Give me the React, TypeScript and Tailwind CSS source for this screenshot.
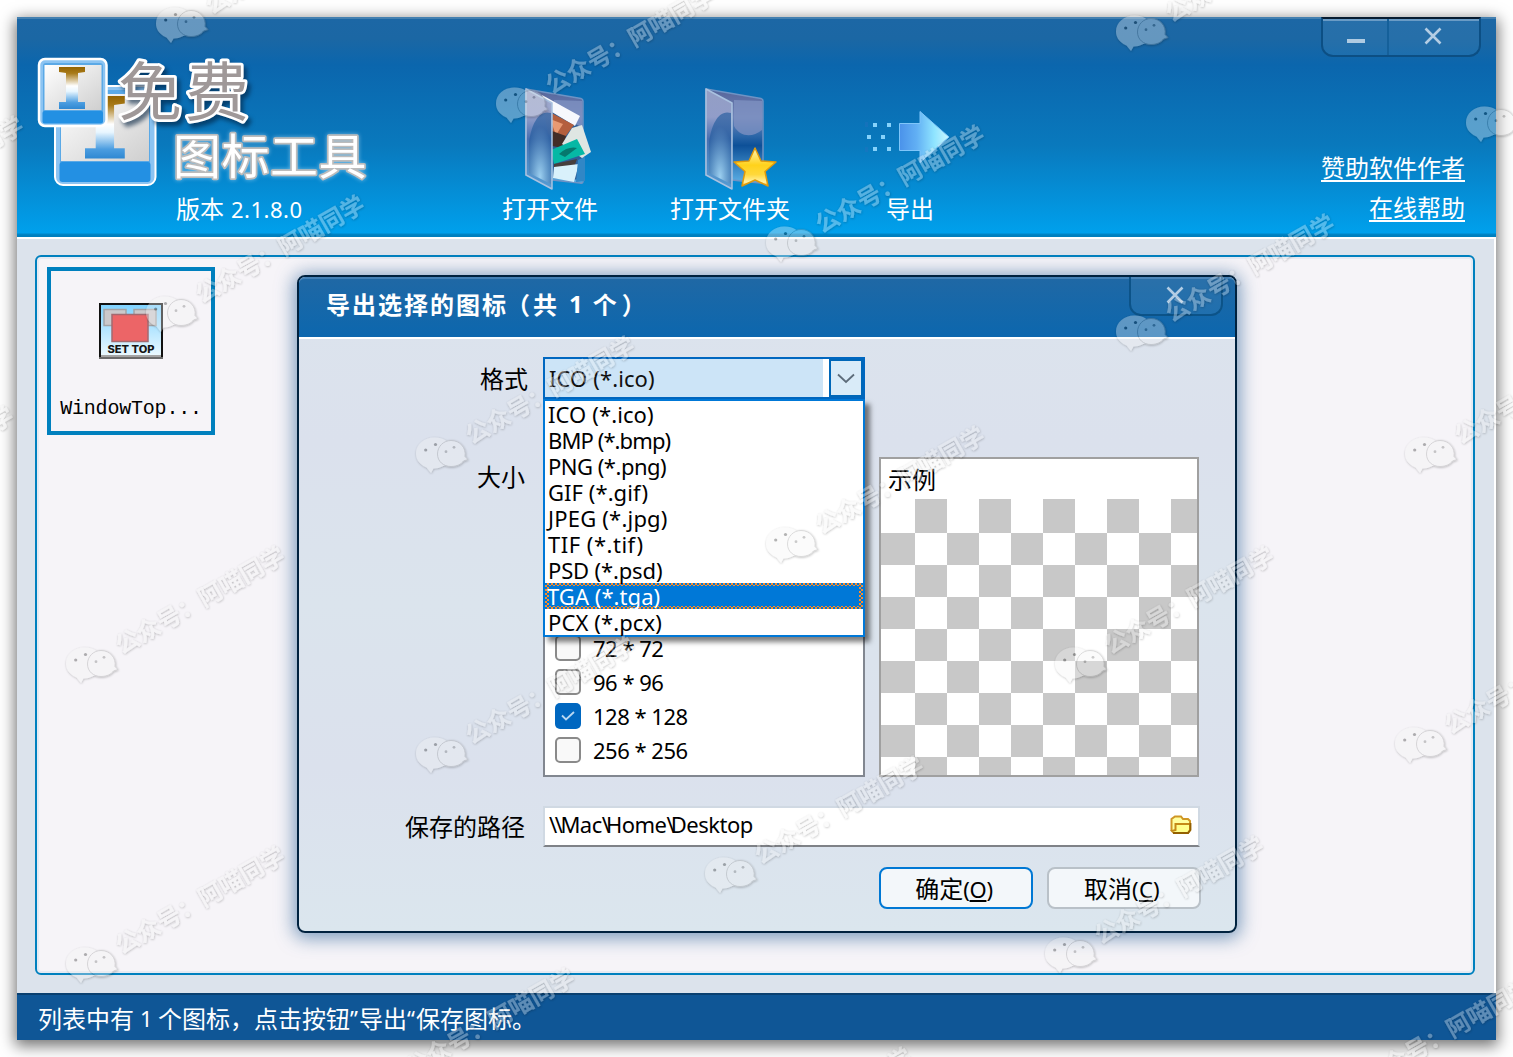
import React from "react";

const CJK = "font-['Noto_Sans_CJK_SC',sans-serif]";
const UI = "font-['Noto_Sans','Noto_Sans_CJK_SC',sans-serif]";

const formats = [
  { label: "ICO (*.ico)", spacing: "tracking-[0.1px]" },
  { label: "BMP (*.bmp)", spacing: "tracking-[-0.9px]" },
  { label: "PNG (*.png)", spacing: "tracking-[-0.5px]" },
  { label: "GIF (*.gif)", spacing: "tracking-[0.05px]" },
  { label: "JPEG (*.jpg)", spacing: "tracking-[0.2px]" },
  { label: "TIF (*.tif)", spacing: "tracking-[0.5px]" },
  { label: "PSD (*.psd)", spacing: "tracking-[-0.15px]" },
  { label: "TGA (*.tga)", spacing: "tracking-[0.05px]" },
  { label: "PCX (*.pcx)", spacing: "tracking-[0.1px]" },
];

const sizes = [
  { label: "72 * 72", checked: false },
  { label: "96 * 96", checked: false },
  { label: "128 * 128", checked: true },
  { label: "256 * 256", checked: false },
];

const marks: [number, number][] = [
  [182, 23], [522, 103], [1142, 31], [1492, 122], [172, 312], [792, 242],
  [1142, 331], [442, 453], [792, 543], [1431, 453], [92, 663], [1081, 663],
  [442, 753], [1421, 743], [92, 963], [731, 873], [1071, 953],
  [-169, 233], [-179, 523], [382, 1085], [1340, 1094], [719, 1164],
];

function Watermark() {
  return (
    <svg className="pointer-events-none absolute inset-0 z-30" width="1513" height="1057" viewBox="0 0 1513 1057">
      <defs>
        <filter id="wmShadow" x="-20%" y="-20%" width="140%" height="140%">
          <feDropShadow dx="0.4" dy="0.7" stdDeviation="0.9" floodColor="#000" floodOpacity="0.75" />
        </filter>
      </defs>
      {marks.map(([x, y], i) => (
        <g key={i} transform={`translate(${x} ${y})`} opacity="0.34" filter="url(#wmShadow)">
          <path
            d="M-7.500-15.500C-18-15.500-26-8.500-26 0.500C-26 6-23 10-18.500 13L-15.500 14.500L-11 20L-8.500 15.500C-5 15.500-2 14.500 0 13.500C8 11 10 5 10.500-3C8.500-11 1-15.500-7.500-15.500Z"
            fill="#f4f4f4"
          />
          <path
            d="M9-12.500C1.500-12.500-4.500-6.500-4.500 1C-4.500 8.500 1.500 13.500 9 13.500C15 13.500 19.500 11 21.500 8L26 6.500L23 3.500C24.500-5 18-12.500 9-12.500Z"
            fill="#f4f4f4"
            stroke="#8f8f8f"
            strokeWidth="0.9"
          />
          <circle cx="-16.300" cy="-3" r="1.600" fill="#222" />
          <circle cx="-6.500" cy="-8.500" r="1.600" fill="#222" />
          <circle cx="4" cy="-1.300" r="1.400" fill="#666" />
          <circle cx="12" cy="-5.700" r="1.400" fill="#666" />
          <text
            transform="translate(35.500 -22) rotate(-29.700)"
            x="-12"
            y="9"
            fontSize="23.800"
            fontWeight="700"
            fontFamily="'Noto Sans CJK SC', sans-serif"
            fill="#f4f4f4"
          >
            公众号：阿喵同学
          </text>
        </g>
      ))}
    </svg>
  );
}

function Logo() {
  const beam = (
    <path d="M0 0H26V5L19 6V35H26V42H0V35H7V6L0 5Z" fill="url(#beam)" />
  );
  return (
    <svg width="360" height="200" viewBox="17 17 360 200" className="shrink-0">
      <defs>
        <linearGradient id="beam" x1="0" y1="0" x2="0" y2="1">
          <stop offset="0" stopColor="#936300" />
          <stop offset=".15" stopColor="#a87a18" />
          <stop offset=".45" stopColor="#fff" />
          <stop offset=".58" stopColor="#e8f6ff" />
          <stop offset=".85" stopColor="#4b9de0" />
          <stop offset="1" stopColor="#2f88d2" />
        </linearGradient>
        <linearGradient id="paper" x1="0" y1="0" x2="1" y2="1">
          <stop offset="0" stopColor="#fff" />
          <stop offset="1" stopColor="#cfcfcf" />
        </linearGradient>
      </defs>
      <rect x="55" y="86" width="100.500" height="99" rx="8" fill="#8cc4f2" stroke="#fff" strokeWidth="2" />
      <rect x="60" y="90" width="90" height="91" rx="3" fill="#5ba9e6" />
      <rect x="61" y="94" width="88" height="67" fill="url(#paper)" />
      <rect x="59.500" y="162" width="91" height="20" rx="3" fill="#2390e3" />
      <g transform="translate(85 96) scale(1.530 1.490)">{beam}</g>
      <rect x="39" y="59" width="67.500" height="67" rx="6" fill="#8cc4f2" stroke="#fff" strokeWidth="2.500" />
      <rect x="43" y="63" width="60" height="59" rx="3" fill="#5ba9e6" />
      <rect x="44.500" y="65" width="57" height="45" fill="url(#paper)" />
      <rect x="42.500" y="111" width="60.500" height="12.500" rx="2" fill="#2390e3" />
      <g transform="translate(59 67)">{beam}</g>
      <g style={{ filter: "drop-shadow(3px 4px 2px rgba(0,30,60,.6))" }}>
        <text
          x="118"
          y="115"
          fontSize="64"
          letterSpacing="3"
          fontWeight="400"
          fontFamily="'Noto Sans CJK SC', sans-serif"
          fill="#9f9898"
          stroke="#fff"
          strokeWidth="5.500"
          strokeLinejoin="round"
          paintOrder="stroke"
        >
          免费
        </text>
      </g>
      <g style={{ filter: "drop-shadow(0 0 2px rgba(190,225,250,.6))" }}>
        <text
          x="173"
          y="174"
          fontSize="48"
          fontWeight="400"
          letterSpacing="0.500"
          fontFamily="'Noto Sans CJK SC', sans-serif"
          fill="#fff"
          stroke="#bcbcbc"
          strokeWidth="3.500"
          strokeLinejoin="round"
          paintOrder="stroke"
        >
          图标工具
        </text>
      </g>
    </svg>
  );
}

function FolderIcon({ kind }: { kind: "files" | "star" }) {
  return (
    <svg width="96" height="104" viewBox="0 0 96 104">
      <defs>
        <linearGradient id="fBack" x1="0" y1="0" x2="0" y2="1">
          <stop offset="0" stopColor="#56659a" />
          <stop offset=".3" stopColor="#6f84b8" />
          <stop offset=".5" stopColor="#2a66a8" />
          <stop offset=".6" stopColor="#0d5098" />
          <stop offset="1" stopColor="#5cb0e6" />
        </linearGradient>
        <linearGradient id="fFront" x1="0" y1="0" x2="0" y2="1">
          <stop offset="0" stopColor="#98a3c8" />
          <stop offset=".28" stopColor="#949fca" />
          <stop offset=".5" stopColor="#4b70b2" />
          <stop offset=".75" stopColor="#4f8cc6" />
          <stop offset="1" stopColor="#5e9dd2" />
        </linearGradient>
        <radialGradient id="fGlow" cx=".5" cy=".9" r=".7">
          <stop offset="0" stopColor="#a9daf6" />
          <stop offset="1" stopColor="#275e9f" stopOpacity=".8" />
        </radialGradient>
        <linearGradient id="star" x1="0" y1="0" x2="0" y2="1">
          <stop offset="0" stopColor="#fff6b8" />
          <stop offset=".45" stopColor="#ffd21b" />
          <stop offset=".7" stopColor="#ffd83c" />
          <stop offset=".9" stopColor="#fff3a8" />
          <stop offset="1" stopColor="#f5a300" />
        </linearGradient>
      </defs>
      <path d="M24 1L79 10.500Q81 11 81 13V91Q82 96 78 95L50 92L24 87Z" fill="url(#fBack)" stroke="#6f93c4" strokeWidth="1.500" />
      <path d="M52 12L80 13V42C70 50 58 49 52 38Z" fill="#8093c3" fillOpacity=".75" />
      {kind === "files" && (
        <g>
          <path d="M50 24L77 38L81 92L51 90Z" fill="#2e5f98" />
          <path d="M40 7L78 28L73 38L45 21Z" fill="#f6f8fd" />
          <path d="M42 21L72 37L60 53L46 46Z" fill="#b45f3e" />
          <path d="M48 31L61 36L54 47Z" fill="#e99a73" />
          <path d="M50 43L64 48L61 60L50 58Z" fill="#432d28" />
          <path d="M70 40L80 37L89 64L80 70L60 56Z" fill="#dfe6e3" />
          <path d="M49 62L75 51L83 66L52 76Z" fill="#06b8a5" />
          <path d="M57 66Q66 58 75 60L63 69Z" fill="#06786e" />
          <path d="M52 76L75 71L71 82L52 81Z" fill="#473f3d" />
          <path d="M52 79L77 76L72 94L51 90Z" fill="#d9f1fb" />
          <path d="M76 72L83 69V93L74 94Z" fill="#3187c6" />
        </g>
      )}
      <path d="M24 1L50 15V101L24 87Z" fill="url(#fFront)" fillOpacity=".93" stroke="#a9c2e0" strokeWidth="1.500" strokeLinejoin="round" />
      <path d="M49 25C36 21 29 38 27 54V85L49 96Z" fill="url(#fGlow)" fillOpacity=".85" />
      {kind === "star" && (
        <path
          d="M73 60L79 73L94 74L83 83.500L86 98L73 92L60 98L63 83.500L52 74L67 73Z"
          fill="url(#star)"
          stroke="#e09a0c"
          strokeWidth="1.500"
          strokeLinejoin="round"
        />
      )}
    </svg>
  );
}

function ExportIcon() {
  return (
    <svg width="96" height="104" viewBox="0 0 96 104">
      <defs>
        <linearGradient id="arr" x1="0" y1="0" x2="1" y2="0">
          <stop offset="0" stopColor="#4a92ea" />
          <stop offset=".35" stopColor="#62b0f4" />
          <stop offset=".7" stopColor="#8fe4ff" />
          <stop offset="1" stopColor="#c9f6ff" />
        </linearGradient>
      </defs>
      <path d="M37.500 35.500H58V23.500L87 49L58 74.500V62.500H37.500Z" fill="url(#arr)" stroke="#7fc6fa" strokeWidth="1" />
      <path d="M11 35h4v4h-4zM25 35h4v4h-4zM5 47h4v4h-4zM19 47h4v4h-4zM11 59h4v4h-4zM25 59h4v4h-4z" fill="#86d2fb" />
      <path d="M3 34h3v5h-3zM3 59h3v5h-3z" fill="#2a6fc0" fillOpacity=".35" />
    </svg>
  );
}

function CloseGlyph() {
  return (
    <svg width="18" height="18" viewBox="0 0 18 18" className="-ml-0.5 -mt-0.5">
      <path d="M1.500 1.500L16.500 16.500M16.500 1.500L1.500 16.500" stroke="#b3cde4" strokeWidth="2.600" />
    </svg>
  );
}

function AppThumb() {
  return (
    <svg width="64" height="56" viewBox="0 0 64 56">
      <defs>
        <linearGradient id="sky" x1="0" y1="0" x2="0" y2="1">
          <stop offset="0" stopColor="#7fd2ff" />
          <stop offset="1" stopColor="#f0fbff" />
        </linearGradient>
      </defs>
      <rect x="1" y="1" width="62" height="54" fill="url(#sky)" stroke="#111" strokeWidth="2" />
      <rect x="5" y="6.500" width="22" height="16" fill="#cbc9cb" stroke="#a4a4a6" strokeWidth="1.500" />
      <rect x="35" y="6.500" width="22" height="16" fill="#cbc9cb" stroke="#a4a4a6" strokeWidth="1.500" />
      <rect x="13" y="11.500" width="36" height="27" fill="#ec6567" stroke="#a36a70" strokeWidth="1.500" />
      <text x="8.500" y="49.500" fontSize="10" fontWeight="800" fontFamily="Inter, sans-serif" fill="#151515" textLength="47" lengthAdjust="spacingAndGlyphs">
        SET TOP
      </text>
      <path d="M2 52H62V54H2Z" fill="#a5a5a5" />
      <path d="M0 54H64V56H0Z" fill="#6b6b6b" />
    </svg>
  );
}

function ToolItem({ icon, label }: { icon: React.ReactNode; label: string }) {
  return (
    <button className="flex w-[180px] flex-col items-center pt-[71px]">
      {icon}
      <span className="text-2xl leading-8 text-white">{label}</span>
    </button>
  );
}

function Dialog() {
  return (
    <section className="absolute left-[280px] top-[258px] z-10 flex h-[658px] w-[940px] flex-col rounded-lg border-2 border-[#00223f] bg-[linear-gradient(#dce4ed,#dbe1ed_25%,#dbe4ed_50%,#dbe1ed_75%,#dbe6ee)] shadow-[0_2px_18px_3px_rgba(40,95,150,0.6)]">
      <header className="flex h-[62px] shrink-0 items-start justify-between rounded-t-md border-b-2 border-t-2 border-b-white border-t-[#4480b5] bg-[linear-gradient(#1f68a5,#0c67ae)] pl-[27px] pr-3">
        <h2 className="flex pt-[7px] text-2xl font-bold leading-9 text-white">
          <span className="tracking-[2px]">导出选择的图标</span>
          <span className="-ml-[2px]">（</span>
          <span className="ml-[3px]">共</span>
          <span className="ml-3 mr-[10px] font-['Noto_Sans']">1</span>
          <span>个</span>
          <span className="ml-[5px]">）</span>
        </h2>
        <div className="-mt-0.5 flex h-[39px] w-[94px] items-center justify-center rounded-b-xl border-2 border-t-0 border-[#0c5388] bg-white/5">
          <CloseGlyph />
        </div>
      </header>

      <div className="flex flex-col pr-[35px] pt-[18px]">
        <div className="flex h-[42px]">
          <label className="w-[244px] shrink-0 pr-[15px] pt-[3px] text-right text-2xl leading-9">格式</label>
          <div className="relative h-[42px] w-[322px] text-[22px]">
            <div className="flex h-[42px] border-2 border-[#0067c0] bg-[#cce4f7]">
              <span className={`flex-1 pl-1 leading-[38px] tracking-[0.1px] text-[#111] ${UI}`}>ICO (*.ico)</span>
              <span className="w-1.5 bg-white" />
              <span className="flex w-[34px] items-center justify-center border-2 border-[#0067b8] bg-[#d9ebf8]">
                <svg width="18" height="11" viewBox="0 0 18 11" className="-ml-px">
                  <path d="M1 1.500L9 9L17 1.500" fill="none" stroke="#5d6c7a" strokeWidth="1.800" />
                </svg>
              </span>
            </div>
            <ul className={`absolute left-0 top-[42px] z-20 w-[322px] border-2 border-[#0078d7] bg-white shadow-[5px_5px_5px_rgba(0,0,0,0.5)] ${UI}`}>
              {formats.map((f) =>
                f.label.startsWith("TGA") ? (
                  <li
                    key={f.label}
                    className="h-[26px] bg-[repeating-conic-gradient(#ff8c27_0_25%,#0078d7_0_50%)] bg-[length:4px_4px] px-1 py-[3px] text-white"
                  >
                    <div className={`h-5 bg-[#0078d7] leading-5 ${f.spacing}`}>
                      <span className="-ml-0.5">{f.label}</span>
                    </div>
                  </li>
                ) : (
                  <li key={f.label} className={`h-[26px] pl-[3px] leading-[26px] text-black ${f.spacing}`}>
                    {f.label}
                  </li>
                ),
              )}
            </ul>
          </div>
        </div>

        <div className="mt-[58px] flex h-80">
          <label className="w-[244px] shrink-0 pr-[18px] pt-px text-right text-2xl leading-9">大小</label>
          <div className="flex w-[322px] flex-col justify-end border-2 border-[#828790] bg-white pb-2 pl-[10px]">
            {sizes.map((s) => (
              <div key={s.label} className="flex h-[34px] items-center gap-3">
                {s.checked ? (
                  <span className="flex size-[26px] items-center justify-center rounded-[5px] bg-[#0067c0]">
                    <svg width="14" height="10" viewBox="0 0 14 10">
                      <path d="M1 4.500L5 8.500L13 1" fill="none" stroke="#b9d8f2" strokeWidth="1.800" />
                    </svg>
                  </span>
                ) : (
                  <span className="size-[26px] rounded-[5px] border-2 border-[#8a8a8a] bg-[#f9f9f9]" />
                )}
                <span className={`text-[22px] leading-[34px] tracking-[-0.5px] ${UI}`}>{s.label}</span>
              </div>
            ))}
          </div>
          <div className="ml-[14px] flex w-80 flex-col border-2 border-[#a0a0a0] bg-white">
            <span className="h-10 pl-[7px] text-2xl leading-[39px]">示例</span>
            <div className="grid flex-1 grid-cols-[34px_repeat(9,32px)] grid-rows-[34px_repeat(8,32px)] overflow-hidden">
              {Array.from({ length: 90 }, (_, i) => (
                <span key={i} className={(Math.floor(i / 10) + (i % 10)) % 2 ? "bg-[#c8c8c8]" : "bg-white"} />
              ))}
            </div>
          </div>
        </div>

        <div className="mt-[29px] flex h-[41px]">
          <label className="w-[244px] shrink-0 pr-[18px] pt-0.5 text-right text-2xl leading-9">保存的路径</label>
          <div className="flex w-[657px] items-start justify-between border-2 border-[#d0d9e3] border-b-[#7f8287] bg-white pl-1 pr-[6px]">
            <span className={`text-[22px] leading-8 tracking-[-0.5px] ${UI}`}>
              <span className="tracking-[-2.500px]">\\</span>Mac<span className="tracking-[-4px]">\</span>Home
              <span className="tracking-[-4px]">\</span>Desktop
            </span>
            <svg width="22" height="20" viewBox="0 0 22 20" className="mt-[7px]">
              <path d="M1.500 16V4L5 1.500H11L13 4H18L20 6V9H6V17" fill="#ffffa0" stroke="#cf9725" strokeWidth="2" />
              <path d="M5.500 9H20V15L18 18H4L2 16L5.500 15Z" fill="#ffff8c" stroke="#c58a18" strokeWidth="2" />
              <path d="M3 18H18L20.500 15V8" fill="none" stroke="#946000" strokeWidth="1.800" />
            </svg>
          </div>
        </div>

        <div className={`mt-5 flex gap-[14px] pl-[580px] text-2xl ${CJK}`}>
          <button className="h-[42px] w-[154px] shrink-0 rounded-lg border-2 border-[#0078d4] bg-[#f3f7fa] pr-1">
            确定<span className="font-['Noto_Sans'] text-[22px] tracking-[-0.3px]">(<u className="underline-offset-2">O</u>)</span>
          </button>
          <button className="h-[42px] w-[154px] shrink-0 rounded-lg border-2 border-[#b9c1c8] bg-[#f3f7fa] pr-1">
            取消<span className="font-['Noto_Sans'] text-[22px] tracking-[0.3px]">(<u className="underline-offset-2">C</u>)</span>
          </button>
        </div>
      </div>
    </section>
  );
}

export default function App() {
  return (
    <div className={`relative h-[1057px] w-[1513px] overflow-hidden bg-white pl-[17px] pt-[17px] text-black ${CJK}`}>
      <main className="relative flex h-[1023px] w-[1479px] flex-col bg-[#dce3ec] shadow-[0_4px_14px_2px_rgba(0,0,0,0.55)]">
        <header className="flex h-[222px] shrink-0 border-b-2 border-t-2 border-b-white border-t-[#4480b0] bg-[linear-gradient(#1c67a5,#1b67a4_9%,#0b66ad_21%,#0979bd_58%,#00a0ec_98%,#007fbe_99%)]">
          <div className="flex w-[443px] shrink-0 flex-col">
            <div className="-mt-0.5 h-[173px] overflow-hidden">
              <Logo />
            </div>
            <p className="pl-[159px] text-2xl leading-9 text-white">
              版本<span className="ml-[7px] font-['Noto_Sans'] text-[22px] tracking-[0.5px]">2.1.8.0</span>
            </p>
          </div>
          <nav className="-mt-0.5 flex">
            <ToolItem icon={<FolderIcon kind="files" />} label="打开文件" />
            <ToolItem icon={<FolderIcon kind="star" />} label="打开文件夹" />
            <ToolItem icon={<ExportIcon />} label="导出" />
          </nav>
          <div className="-mt-0.5 ml-auto flex flex-col items-end pr-[15px]">
            <div className="flex h-10 w-40 rounded-b-xl border-2 border-[#0c4f84] border-t-[#061b30] bg-white/5 shadow-[inset_0_2px_0_#6a9bc5]">
              <span className="flex w-[66px] items-center justify-center border-r-2 border-[#15609a] pl-0.5 pt-2">
                <span className="h-1 w-[18px] bg-[#afcbe2]" />
              </span>
              <span className="flex flex-1 items-center justify-center">
                <CloseGlyph />
              </span>
            </div>
            <div className="mt-[90px] flex flex-col items-end pr-4 text-2xl leading-10 text-white">
              <a className="underline decoration-2 underline-offset-[3px]">赞助软件作者</a>
              <a className="underline decoration-2 underline-offset-[3px]">在线帮助</a>
            </div>
          </div>
        </header>

        <div className="flex-1 border-r-2 border-white px-[18px] pb-[18px] pt-4">
          <div className="h-[720px] w-[1440px] rounded-md border-2 border-[#0080be] bg-[#f6f4f8] p-[10px] shadow-[inset_0_0_0_2px_#e6eaf2]">
            <article className="flex size-[168px] flex-col items-center border-4 border-[#0080be] pt-8">
              <AppThumb />
              <span className="mt-[38px] whitespace-nowrap font-['Liberation_Mono',monospace] text-[20px] leading-6 tracking-[-0.2px]">
                WindowTop...
              </span>
            </article>
          </div>
        </div>

        <footer className="flex h-[47px] shrink-0 items-center border-t-2 border-[#0a4070] bg-[#0f5696] pl-[21px] pt-px text-2xl leading-10 text-white">
          <span>列表中有</span>
          <span className="mx-[6px] w-3 text-center font-['Noto_Sans'] text-[22px]">1</span>
          <span>个图标，点击按钮</span>
          <span className="w-[9px] font-['Noto_Sans'] text-[22px]">”</span>
          <span>导出</span>
          <span className="w-[9px] font-['Noto_Sans'] text-[22px]">“</span>
          <span>保存图标。</span>
        </footer>

        <Dialog />
      </main>
      <Watermark />
    </div>
  );
}
